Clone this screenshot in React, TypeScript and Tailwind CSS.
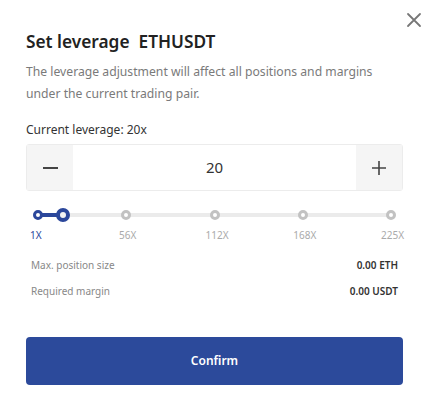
import React from "react";

const font = { fontFamily: '"Noto Sans", "Open Sans", sans-serif' };

export default function App() {
  const stops = ["1X", "56X", "112X", "168X", "225X"];
  return (
    <div className="w-[429px] h-[408px] bg-white relative" style={font}>
      <button className="absolute right-[7px] top-[12px] w-[16px] h-[16px] text-[#777]">
        <svg viewBox="0 0 16 16" width="16" height="16" fill="none" stroke="currentColor" strokeWidth="1.8" strokeLinecap="round">
          <path d="M2 2L14 14M14 2L2 14" />
        </svg>
      </button>
      <div className="px-[26px] pt-[29px] flex flex-col">
        <h1 className="text-[17.3px] leading-[26px] font-semibold text-[#222]">
          Set leverage&nbsp;&nbsp;ETHUSDT
        </h1>
        <p className="mt-[6px] text-[12.2px] leading-[22px] text-[#7a7a7a]">
          The leverage adjustment will affect all positions and margins under the current trading pair.
        </p>
        <div className="mt-[16px] text-[12px] leading-[18px] text-[#333]">Current leverage: 20x</div>
        <div className="mt-[5px] h-[47px] border border-[#ececec] rounded-[3px] flex items-stretch">
          <div className="w-[46px] bg-[#f5f5f5] flex items-center justify-center">
            <div className="w-[15px] h-[2px] bg-[#444]" />
          </div>
          <div className="flex-1 flex items-center justify-center text-[15px] text-[#333]">20</div>
          <div className="w-[46px] bg-[#f5f5f5] flex items-center justify-center">
            <svg width="14" height="14" viewBox="0 0 14 14" stroke="#444" strokeWidth="1.6">
              <path d="M7 0V14M0 7H14" />
            </svg>
          </div>
        </div>
        <div className="mt-[17px] px-[7px]">
          <div className="relative h-[14px] flex items-center">
            <div className="absolute left-[5px] right-[5px] h-[4px] bg-[#ebebeb] rounded-full" />
            <div className="absolute left-[5px] w-[30px] h-[4px] bg-[#2b479b]" />
            <div className="relative w-full flex justify-between items-center">
              {stops.map((s, i) => (
                <div
                  key={s}
                  className={
                    i === 0
                      ? "w-[10px] h-[10px] rounded-full border-[3px] border-[#2b479b] bg-white"
                      : "w-[10px] h-[10px] rounded-full border-[3px] border-[#c2c2c2] bg-white"
                  }
                />
              ))}
            </div>
            <div className="absolute left-[23px] w-[14px] h-[14px] rounded-full border-[4px] border-[#2b479b] bg-[#f3f3f3]" />
          </div>
          <div className="mt-[6px] flex justify-between text-[10px] leading-[14px] text-[#aaa]">
            <span className="text-[#2b479b] w-[20px] -ml-[3px]">1X</span>
            <span className="w-[20px] text-center">56X</span>
            <span className="w-[20px] text-center">112X</span>
            <span className="w-[20px] text-center">168X</span>
            <span className="w-[20px] text-center -mr-[5px]">225X</span>
          </div>
        </div>
        <div className="mt-[16px] flex flex-col gap-[11px] px-[5px] text-[10px] leading-[15px]">
          <div className="flex justify-between">
            <span className="text-[#888]">Max. position size</span>
            <span className="font-semibold text-[#333]">0.00 ETH</span>
          </div>
          <div className="flex justify-between">
            <span className="text-[#888]">Required margin</span>
            <span className="font-semibold text-[#333]">0.00 USDT</span>
          </div>
        </div>
        <button className="mt-[38px] h-[48px] w-full rounded-[4px] bg-[#2c4a9b] text-white text-[12px] font-semibold">
          Confirm
        </button>
      </div>
    </div>
  );
}
